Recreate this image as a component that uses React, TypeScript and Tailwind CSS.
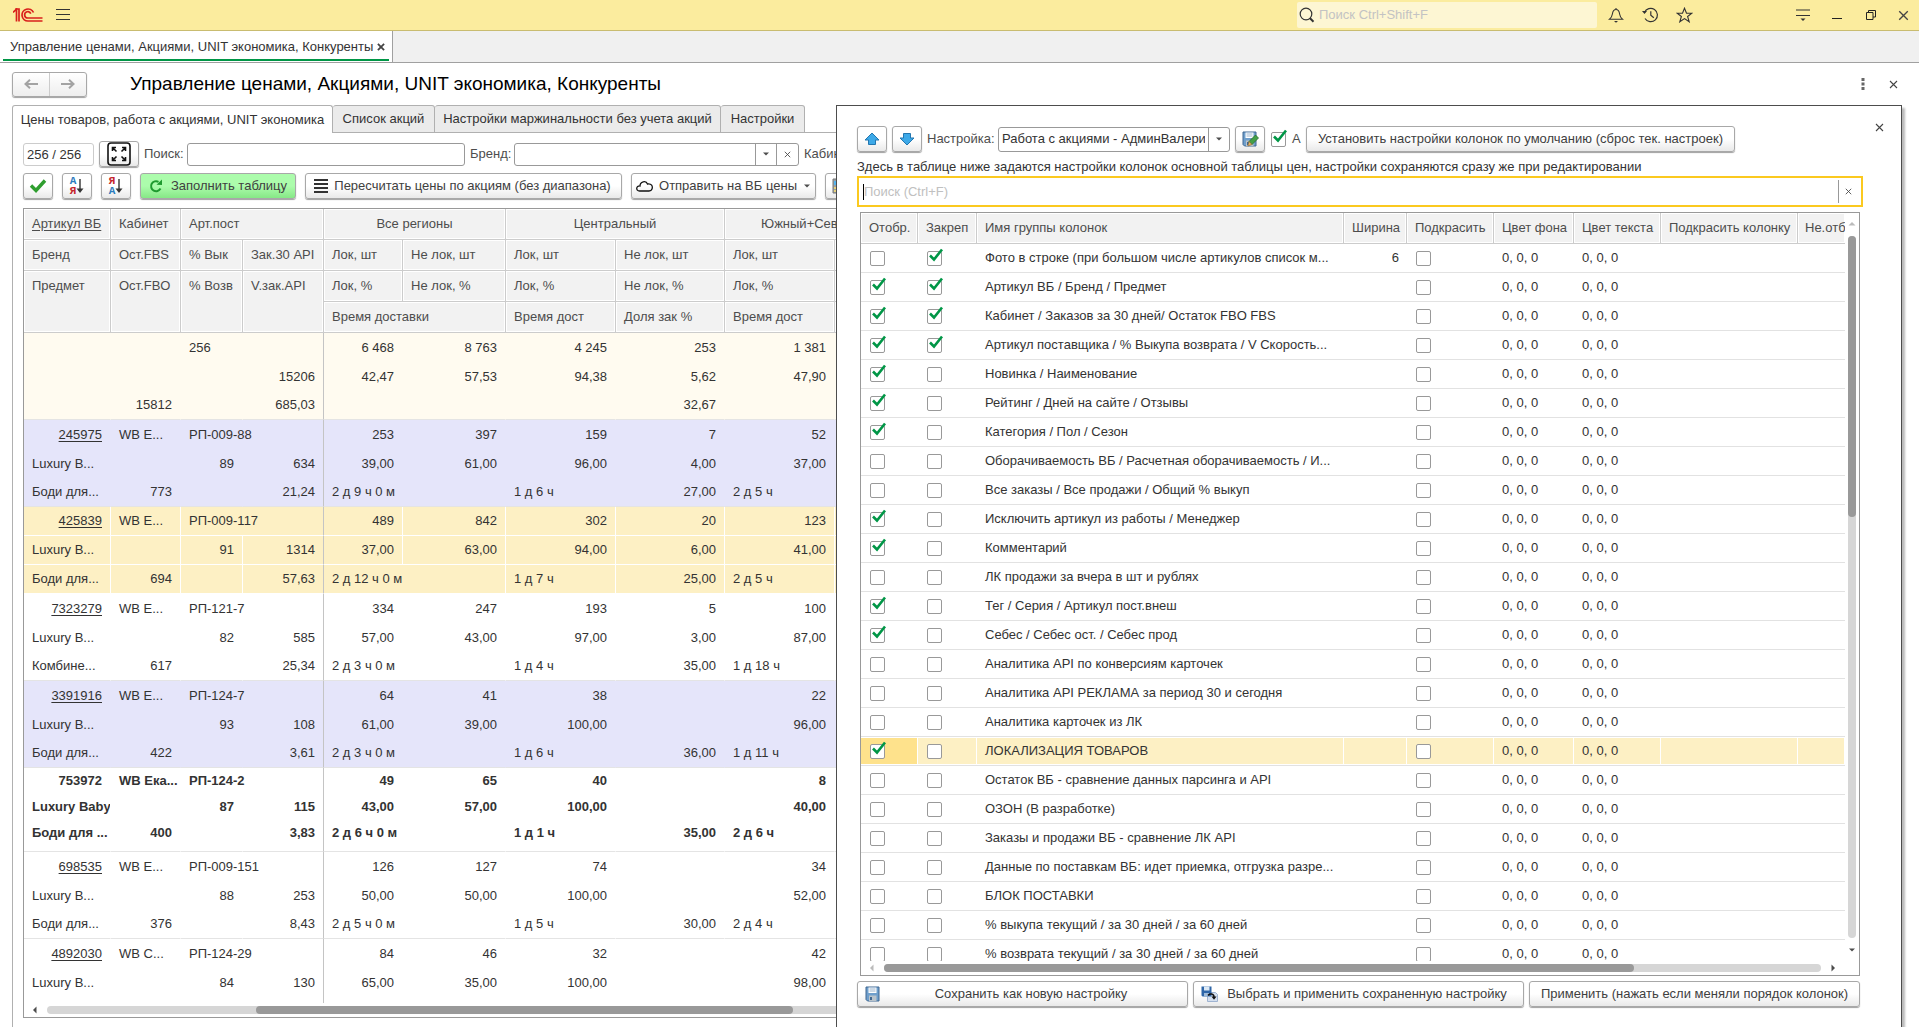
import { ReactNode, useState } from "react";
import clsx from "clsx";

const BTN =
  "flex h-[26px] shrink-0 items-center justify-center rounded-[3px] border border-[#a8a8a8] bg-linear-to-b from-white from-50% to-[#e9e9e9] shadow-[0_1px_1px_#a0a0a0]";

interface Product {
  article: string;
  cabinet: string;
  supplier: string;
  brand: string;
  subject: string;
  fbo: string;
  buyout: string;
  orders: string;
  speed: string;
  qty: string[];
  pct: string[];
  times: string[];
  share: string;
  kind?: "total" | "lilac" | "selected" | "bold";
}

const products: Product[] = [
  {
    article: "", cabinet: "", supplier: "256", brand: "", subject: "", fbo: "15812", buyout: "", orders: "15206", speed: "685,03",
    qty: ["6 468", "8 763", "4 245", "253", "1 381"],
    pct: ["42,47", "57,53", "94,38", "5,62", "47,90"],
    times: ["", "", ""], share: "32,67", kind: "total",
  },
  {
    article: "245975", cabinet: "WB E...", supplier: "РП-009-88", brand: "Luxury B...", subject: "Боди для...", fbo: "773", buyout: "89", orders: "634", speed: "21,24",
    qty: ["253", "397", "159", "7", "52"],
    pct: ["39,00", "61,00", "96,00", "4,00", "37,00"],
    times: ["2 д 9 ч 0 м", "1 д 6 ч", "2 д 5 ч"], share: "27,00", kind: "lilac",
  },
  {
    article: "425839", cabinet: "WB E...", supplier: "РП-009-117", brand: "Luxury B...", subject: "Боди для...", fbo: "694", buyout: "91", orders: "1314", speed: "57,63",
    qty: ["489", "842", "302", "20", "123"],
    pct: ["37,00", "63,00", "94,00", "6,00", "41,00"],
    times: ["2 д 12 ч 0 м", "1 д 7 ч", "2 д 5 ч"], share: "25,00", kind: "selected",
  },
  {
    article: "7323279", cabinet: "WB E...", supplier: "РП-121-7", brand: "Luxury B...", subject: "Комбине...", fbo: "617", buyout: "82", orders: "585", speed: "25,34",
    qty: ["334", "247", "193", "5", "100"],
    pct: ["57,00", "43,00", "97,00", "3,00", "87,00"],
    times: ["2 д 3 ч 0 м", "1 д 4 ч", "1 д 18 ч"], share: "35,00",
  },
  {
    article: "3391916", cabinet: "WB E...", supplier: "РП-124-7", brand: "Luxury B...", subject: "Боди для...", fbo: "422", buyout: "93", orders: "108", speed: "3,61",
    qty: ["64", "41", "38", "", "22"],
    pct: ["61,00", "39,00", "100,00", "", "96,00"],
    times: ["2 д 3 ч 0 м", "1 д 6 ч", "1 д 11 ч"], share: "36,00", kind: "lilac",
  },
  {
    article: "753972", cabinet: "WB Ека...", supplier: "РП-124-2", brand: "Luxury Baby", subject: "Боди для ...", fbo: "400", buyout: "87", orders: "115", speed: "3,83",
    qty: ["49", "65", "40", "", "8"],
    pct: ["43,00", "57,00", "100,00", "", "40,00"],
    times: ["2 д 6 ч 0 м", "1 д 1 ч", "2 д 6 ч"], share: "35,00", kind: "bold",
  },
  {
    article: "698535", cabinet: "WB E...", supplier: "РП-009-151", brand: "Luxury B...", subject: "Боди для...", fbo: "376", buyout: "88", orders: "253", speed: "8,43",
    qty: ["126", "127", "74", "", "34"],
    pct: ["50,00", "50,00", "100,00", "", "52,00"],
    times: ["2 д 5 ч 0 м", "1 д 5 ч", "2 д 4 ч"], share: "30,00",
  },
  {
    article: "4892030", cabinet: "WB C...", supplier: "РП-124-29", brand: "Luxury B...", subject: "", fbo: "", buyout: "84", orders: "130", speed: "",
    qty: ["84", "46", "32", "", "42"],
    pct: ["65,00", "35,00", "100,00", "", "98,00"],
    times: ["", "", ""], share: "",
  },
];

// [name, shown, pinned, width]
const initialGroups: [string, boolean, boolean, string?][] = [
  ["Фото в строке (при большом числе артикулов список м...", false, true, "6"],
  ["Артикул ВБ / Бренд / Предмет", true, true],
  ["Кабинет / Заказов за 30 дней/ Остаток FBO FBS", true, true],
  ["Артикул поставщика / % Выкупа возврата / V Скорость...", true, true],
  ["Новинка / Наименование", true, false],
  ["Рейтинг / Дней на сайте / Отзывы", true, false],
  ["Категория / Пол / Сезон", true, false],
  ["Оборачиваемость ВБ / Расчетная оборачиваемость / И...", false, false],
  ["Все заказы / Все продажи / Общий % выкуп", false, false],
  ["Исключить артикул из работы / Менеджер", true, false],
  ["Комментарий", true, false],
  ["ЛК продажи за вчера в шт и рублях", false, false],
  ["Тег / Серия / Артикул пост.внеш", true, false],
  ["Себес / Себес ост. / Себес прод", true, false],
  ["Аналитика API по конверсиям карточек", false, false],
  ["Аналитика API РЕКЛАМА за период 30 и сегодня", false, false],
  ["Аналитика карточек из ЛК", false, false],
  ["ЛОКАЛИЗАЦИЯ ТОВАРОВ", true, false],
  ["Остаток ВБ - сравнение данных парсинга и API", false, false],
  ["ОЗОН (В разработке)", false, false],
  ["Заказы и продажи ВБ - сравнение ЛК API", false, false],
  ["Данные по поставкам ВБ: идет приемка, отгрузка разре...", false, false],
  ["БЛОК ПОСТАВКИ", false, false],
  ["% выкупа текущий / за 30 дней / за 60 дней", false, false],
  ["% возврата текущий / за 30 дней / за 60 дней", false, false],
];

function Cross({ size = 9, bold = false }: { size?: number; bold?: boolean }) {
  return (
    <svg width={size} height={size} viewBox="0 0 9 9" stroke="#444" strokeWidth={bold ? 2 : 1.1}>
      <path d="M1 1l7 7M8 1l-7 7" />
    </svg>
  );
}

function Caret({ dir = "down", color = "#4d4d4d" }: { dir?: "down" | "up" | "left" | "right"; color?: string }) {
  const d = {
    down: "M1 2.5h6L4 5.5z",
    up: "M0.5 5.5h7L4 2z",
    left: "M5.5 0.5v7L2 4z",
    right: "M2.5 0.5v7L6 4z",
  };
  return (
    <svg width="8" height="8" viewBox="0 0 8 8" fill={color}>
      <path d={d[dir]} />
    </svg>
  );
}

function Check({ label, defaultChecked = false }: { label: string; defaultChecked?: boolean }) {
  return (
    <span className="relative block size-[15px] shrink-0">
      <input
        type="checkbox"
        aria-label={label}
        defaultChecked={defaultChecked}
        className="peer block size-[15px] appearance-none rounded-[2px] border border-[#999] bg-white"
      />
      <svg
        width="17"
        height="16"
        viewBox="0 0 17 16"
        fill="none"
        className="pointer-events-none absolute -top-1 left-0 hidden peer-checked:block"
      >
        <path d="M3 8.5l4 4L15 2.5" stroke="#009646" strokeWidth="2.6" />
      </svg>
    </span>
  );
}

function SortIcon({ flip = false }: { flip?: boolean }) {
  return (
    <span className="flex items-center">
      <span className="flex flex-col font-['Liberation_Mono',monospace] text-[11px] leading-[10px] font-bold">
        <span className={flip ? "text-[#c4262e]" : "text-[#2b7bbd]"}>{flip ? "Я" : "А"}</span>
        <span className={flip ? "text-[#2b7bbd]" : "text-[#c4262e]"}>{flip ? "А" : "Я"}</span>
      </span>
      <svg width="8" height="16" viewBox="0 0 8 16" fill="none">
        <path d="M4 1v12" stroke="#333" strokeWidth="1.4" />
        <path d="M0.5 10.5h7L4 15z" fill="#333" />
      </svg>
    </span>
  );
}

function BigArrow({ down = false }: { down?: boolean }) {
  return (
    <svg width="16" height="14" viewBox="0 0 16 14" className={clsx(down && "rotate-180")}>
      <path
        d="M8 1L15 8H11.5V12.5H4.5V8H1z"
        fill="#3da9e8"
        stroke="#2377b0"
        strokeWidth="1"
        strokeLinejoin="round"
      />
    </svg>
  );
}

function Floppy({ pencil = false }: { pencil?: boolean }) {
  return (
    <svg width="17" height="16" viewBox="0 0 17 16">
      <path d="M1 1h13v14H2.5L1 13.5z" fill="#6f9fcc" stroke="#3f6791" />
      <path d="M3.5 1.5h8v5.5h-8z" fill="#fff" />
      <path d="M4.5 3h6M4.5 5h6" stroke="#9ab3cc" />
      <path d="M4 9.5h7.5V15H4z" fill="#b9c3cb" />
      <path d="M5 11h2v3H5z" fill="#3f6791" />
      {pencil && (
        <>
          <path d="M7 10.5L13.5 4l3 3L10 13.5z" fill="#43a047" stroke="#2a6f2e" strokeWidth=".8" />
          <path d="M7 10.5l3 3L5.8 15z" fill="#e8b46a" stroke="#8a6326" strokeWidth=".6" />
        </>
      )}
    </svg>
  );
}

function FloppyLoad() {
  return (
    <svg width="17" height="16" viewBox="0 0 17 16">
      <path d="M6.500 6.500h8l2 2v7H6.500z" fill="#d4dfee" stroke="#9fb3d1" />
      <path d="M0.500 0.500h10v10h-9l-1-1z" fill="#2f66a8" />
      <path d="M3 0.500h5.500v4H3z" fill="#dce9f5" />
      <path d="M3 7h5v3.500H3z" fill="#9fbbd9" />
      <path d="M7 9.500c1.500-2.500 6-2 6 1.500" fill="none" stroke="#111" strokeWidth="1.500" />
      <path d="M10.500 10.500h5L13 13.800z" fill="#111" />
    </svg>
  );
}

function TopBar() {
  return (
    <header className="flex h-[31px] shrink-0 items-center border-b border-[#c9bc70] bg-[#fbec9e]">
      <svg className="ml-[13px]" width="30" height="14" viewBox="0 0 30 14" fill="none" stroke="#d9201c" strokeWidth="1.7">
        <path d="M0 4.500L3.500 1.200V13.500" />
        <path d="M2.200 1H6V13.500" />
        <path d="M20.500 4.500A6 6 0 1 0 15 13H29.500" />
        <path d="M17.800 5.600A3.200 3.200 0 1 0 15 10H29.500" />
      </svg>
      <button aria-label="Меню" className="ml-[13px]">
        <svg width="14" height="12" viewBox="0 0 14 12" stroke="#333">
          <path d="M0 .5h14M0 5.500h14M0 10.500h14" />
        </svg>
      </button>
      <label className="ml-auto flex h-[26px] w-[300px] items-center gap-1 rounded-[2px] bg-[#fdf6d3] pl-0.5">
        <svg width="16" height="16" viewBox="0 0 16 16" fill="none" stroke="#333">
          <circle cx="7" cy="7" r="5.8" strokeWidth="1.2" />
          <path d="M11 11.200l3.500 3.500" strokeWidth="2" />
        </svg>
        <input
          type="text"
          aria-label="Поиск"
          placeholder="Поиск Ctrl+Shift+F"
          className="min-w-0 flex-1 outline-none placeholder:text-[#c3c3c3]"
        />
      </label>
      <button aria-label="Уведомления" className="ml-0.5 flex w-[34px] justify-center">
        <svg width="16" height="16" viewBox="0 0 16 16" fill="none" stroke="#333" strokeWidth="1.1">
          <path d="M8 1v1.500M1.500 12.200h13c-2-1.500-2.500-2.700-2.900-5.200C11.200 4 10 2.500 8 2.500S4.800 4 4.400 7c-.4 2.500-.9 3.700-2.900 5.200z" />
          <path d="M6 14h4L8 15.800z" fill="#333" stroke="none" />
        </svg>
      </button>
      <button aria-label="История" className="flex w-[34px] justify-center">
        <svg width="17" height="16" viewBox="0 0 17 16" fill="none" stroke="#333" strokeWidth="1.2">
          <path d="M2.500 5.500A6.700 6.700 0 1 1 3 11.500" />
          <path d="M0 4l2.500 3L5 4z" fill="#333" stroke="none" />
          <path d="M8.800 4.200v4l3 2.500" />
        </svg>
      </button>
      <button aria-label="Избранное" className="flex w-[34px] justify-center">
        <svg width="17" height="16" viewBox="0 0 17 16" fill="none" stroke="#333" strokeWidth="1.1">
          <path d="M8.500 1.200l2 5h5.300l-4.200 3.300 1.600 5.300-4.700-3.200-4.700 3.200 1.600-5.300L1.200 6.200h5.300z" />
        </svg>
      </button>
      <button aria-label="Настройка" className="ml-[85px] flex w-[34px] justify-center">
        <svg width="14" height="14" viewBox="0 0 14 14" stroke="#333" strokeWidth="1.2">
          <path d="M0 2h14M0 7.500h14" />
          <path d="M4.500 10.500h5L7 13z" fill="#333" stroke="none" />
        </svg>
      </button>
      <button aria-label="Свернуть" className="flex w-[34px] justify-center">
        <svg width="10" height="10" viewBox="0 0 10 10" stroke="#222">
          <path d="M0 8.500h10" />
        </svg>
      </button>
      <button aria-label="Восстановить" className="flex w-[34px] justify-center">
        <svg width="10" height="10" viewBox="0 0 10 10" fill="none" stroke="#222">
          <path d="M0.500 2.500h6.500v7H0.500zM2.500 2.500v-2h7v6.500H7" />
        </svg>
      </button>
      <button aria-label="Закрыть" className="flex w-[31px] justify-center">
        <Cross size={11} />
      </button>
    </header>
  );
}

function Th({ children, className, ...rest }: { children?: ReactNode; className?: string; colSpan?: number; rowSpan?: number }) {
  return (
    <th
      {...rest}
      className={clsx(
        "h-[31px] overflow-hidden border-r border-b border-[#ccc] bg-[#f2f2f2] px-2 text-left align-top leading-[30px] font-normal whitespace-nowrap text-[#4d4d4d] shadow-[inset_0_0_0_1px_#fff]",
        className,
      )}
    >
      {children}
    </th>
  );
}

function ProductRows({ p }: { p: Product }) {
  const bold = p.kind === "bold";
  const selected = p.kind === "selected";
  const tr = clsx(
    bold ? "h-[26px] font-bold" : "h-[29px]",
    p.kind === "total" && "bg-[#fffbf0]",
    p.kind === "lilac" && "bg-[#e5e5fa]",
    selected && "bg-[#fdf0c4]",
  );
  const base = "overflow-hidden whitespace-nowrap border-r px-2";
  // bottom line of the group carries the separator
  const line = selected ? "border-white border-b" : "border-transparent";
  const last = clsx("border-b", selected ? "border-b-white border-r-white" : "border-b-[#e4e4e4] border-r-transparent");
  const split = "border-r-[#c4c4c4]!";
  return (
    <tbody>
      <tr className={tr}>
        <td className={clsx(base, line, "text-right")}>
          {bold ? p.article : p.article && <a href="#" className="underline underline-offset-2">{p.article}</a>}
        </td>
        <td className={clsx(base, line)}>{p.cabinet}</td>
        <td className={clsx(base, line, split)} colSpan={2}>{p.supplier}</td>
        {p.qty.map((v, i) => (
          <td key={i} className={clsx(base, line, "text-right")}>{v}</td>
        ))}
        <td className={clsx(base, line)} />
      </tr>
      <tr className={tr}>
        <td className={clsx(base, line)}>{p.brand}</td>
        <td className={clsx(base, line)} />
        <td className={clsx(base, line, "text-right")}>{p.buyout}</td>
        <td className={clsx(base, line, split, "text-right")}>{p.orders}</td>
        {p.pct.map((v, i) => (
          <td key={i} className={clsx(base, line, "text-right")}>{v}</td>
        ))}
        <td className={clsx(base, line)} />
      </tr>
      <tr className={clsx(tr, bold && "h-[32px]! align-top leading-[26px]")}>
        <td className={clsx(base, last)}>{p.subject}</td>
        <td className={clsx(base, last, "text-right")}>{p.fbo}</td>
        <td className={clsx(base, last)} />
        <td className={clsx(base, last, split, "text-right")}>{p.speed}</td>
        <td className={clsx(base, last)} colSpan={2}>{p.times[0]}</td>
        <td className={clsx(base, last)}>{p.times[1]}</td>
        <td className={clsx(base, last, "text-right")}>{p.share}</td>
        <td className={clsx(base, last)}>{p.times[2]}</td>
        <td className={clsx(base, last)} />
      </tr>
    </tbody>
  );
}

function PriceTable() {
  return (
    <div className="mt-[9px] mb-[9px] ml-[10px] flex min-h-0 flex-1 flex-col border border-[#999]">
      <div className="min-h-0 flex-1 overflow-hidden">
        <table className="w-[841px] table-fixed border-separate border-spacing-0">
          <colgroup>
            <col className="w-[87px]" />
            <col className="w-[70px]" />
            <col className="w-[62px]" />
            <col className="w-[81px]" />
            <col className="w-[79px]" />
            <col className="w-[103px]" />
            <col className="w-[110px]" />
            <col className="w-[109px]" />
            <col className="w-[110px]" />
            <col className="w-[30px]" />
          </colgroup>
          <thead>
            <tr>
              <Th className="underline underline-offset-2">Артикул ВБ</Th>
              <Th>Кабинет</Th>
              <Th colSpan={2}>Арт.пост</Th>
              <Th colSpan={2} className="text-center!">Все регионы</Th>
              <Th colSpan={2} className="text-center!">Центральный</Th>
              <Th colSpan={2} className="pl-9!">Южный+Сев</Th>
            </tr>
            <tr>
              <Th>Бренд</Th>
              <Th>Ост.FBS</Th>
              <Th>% Вык</Th>
              <Th>Зак.30 API</Th>
              <Th>Лок, шт</Th>
              <Th>Не лок, шт</Th>
              <Th>Лок, шт</Th>
              <Th>Не лок, шт</Th>
              <Th>Лок, шт</Th>
              <Th />
            </tr>
            <tr>
              <Th rowSpan={2}>Предмет</Th>
              <Th rowSpan={2}>Ост.FBO</Th>
              <Th rowSpan={2}>% Возв</Th>
              <Th rowSpan={2}>V.зак.API</Th>
              <Th>Лок, %</Th>
              <Th>Не лок, %</Th>
              <Th>Лок, %</Th>
              <Th>Не лок, %</Th>
              <Th>Лок, %</Th>
              <Th />
            </tr>
            <tr>
              <Th colSpan={2}>Время доставки</Th>
              <Th>Время дост</Th>
              <Th>Доля зак %</Th>
              <Th>Время дост</Th>
              <Th />
            </tr>
          </thead>
          {products.map((p, i) => (
            <ProductRows key={i} p={p} />
          ))}
        </table>
      </div>
      <div className="flex h-[14px] shrink-0 items-center pl-[7px]">
        <Caret dir="left" />
        <div className="ml-2 flex h-2 flex-1 rounded-full bg-[#d6d6d6]">
          <div className="ml-[209px] w-[537px] rounded-full bg-[#999]" />
        </div>
      </div>
    </div>
  );
}

function Toolbar() {
  return (
    <>
      <div className="mt-2 ml-[10px] flex h-[26px] items-center gap-[5px]">
        <input
          type="text"
          aria-label="Количество"
          readOnly
          defaultValue="256 / 256"
          className="h-[23px] w-[71px] shrink-0 rounded-[3px] border border-[#ccc] px-[3px]"
        />
        <button aria-label="На весь экран" className={clsx(BTN, "w-10")}>
          <svg width="24" height="24" viewBox="0 0 24 24" fill="none" stroke="#111">
            <rect x="1" y="1" width="22" height="22" rx="3" strokeWidth="1.600" />
            <path
              d="M5.500 9V5.500H9M15 5.500h3.500V9M18.500 15v3.500H15M9 18.500H5.500V15M5.500 5.500l4 4M18.500 5.500l-4 4M18.500 18.500l-4-4M5.500 18.500l4-4"
              strokeWidth="1.600"
            />
          </svg>
        </button>
        <label htmlFor="search" className="w-[38px] shrink-0 whitespace-nowrap text-[#4d4d4d]">Поиск:</label>
        <input id="search" type="text" className="h-[23px] w-[278px] shrink-0 rounded-[3px] border border-[#999] px-1" />
        <label htmlFor="brand" className="w-[39px] shrink-0 whitespace-nowrap text-[#4d4d4d]">Бренд:</label>
        <div className="flex h-[23px] w-[285px] shrink-0 rounded-[3px] border border-[#999]">
          <input id="brand" type="text" className="min-w-0 flex-1 px-1" />
          <button aria-label="Выбрать бренд" className="flex w-[21px] items-center justify-center border-l border-[#999]">
            <Caret />
          </button>
          <button aria-label="Очистить" className="flex w-[22px] items-center justify-center border-l border-[#999]">
            <Cross size={7} />
          </button>
        </div>
        <span className="text-[#4d4d4d]">Кабинет:</span>
      </div>
      <div className="mt-1.5 ml-[10px] flex items-center gap-[9px] text-[#404040]">
        <button aria-label="Применить" className={clsx(BTN, "w-[30px]")}>
          <svg width="18" height="14" viewBox="0 0 18 14" fill="none">
            <path d="M2 6.500l5 5L16 1.500" stroke="#2f9e2f" strokeWidth="3.400" />
          </svg>
        </button>
        <button aria-label="Сортировать по возрастанию" className={clsx(BTN, "w-[30px]")}>
          <SortIcon />
        </button>
        <button aria-label="Сортировать по убыванию" className={clsx(BTN, "w-[30px]")}>
          <SortIcon flip />
        </button>
        <button className={clsx(BTN, "w-[156px] gap-2 from-[#acfcac]! to-[#86e886]!")}>
          <svg width="14" height="14" viewBox="0 0 14 14" fill="none">
            <path d="M11.500 9.500A5 5 0 1 1 9.500 2.800" stroke="#1f9a2f" strokeWidth="2" />
            <path d="M7.500 5.800L13 6V0.500z" fill="#1f9a2f" />
          </svg>
          Заполнить таблицу
        </button>
        <button className={clsx(BTN, "w-[317px] gap-1.5 pr-0.5")}>
          <svg width="14" height="14" viewBox="0 0 14 14" stroke="#333" strokeWidth="2">
            <path d="M0 1h14M0 5h14M0 9h14M0 13h14" />
          </svg>
          Пересчитать цены по акциям (без диапазона)
        </button>
        <button className={clsx(BTN, "w-[185px] gap-1.5")}>
          <svg width="17" height="12" viewBox="0 0 17 12" fill="none" stroke="#111" strokeWidth="1.300">
            <path d="M3.500 11C-.5 11 0 5.500 4 6 4 1.500 10 0 11.500 4c4-.5 5.500 2 4.500 5-.5 1.500-1.500 2-3 2z" />
          </svg>
          Отправить на ВБ цены
          <Caret />
        </button>
        <button aria-label="Калькулятор" className={clsx(BTN, "w-[40px] justify-start! pl-1.5")}>
          <svg width="14" height="16" viewBox="0 0 14 16">
            <path d="M1 1h12v14H1z" fill="#9aa3a8" stroke="#777" />
            <path d="M2 3h9v4H2z" fill="#56b4ee" />
            <path d="M2 9h2v2H2zM5 9h2v2H5zM2 12h2v2H2z" fill="#e8d27a" />
          </svg>
        </button>
      </div>
    </>
  );
}

const formTabs = [
  { title: "Цены товаров, работа с акциями, UNIT экономика", width: "w-[321px]" },
  { title: "Список акций", width: "w-[102px]" },
  { title: "Настройки маржинальности без учета акций", width: "w-[286px]" },
  { title: "Настройки", width: "w-[84px]" },
];

function PriceForm() {
  const [tab, setTab] = useState(0);
  return (
    <>
      <div className="flex h-[42px] shrink-0 items-center pl-3">
        <div className="flex h-[25px] w-[75px] rounded-[3px] border border-[#a8a8a8] bg-linear-to-b from-white to-[#eee] shadow-[0_1px_1px_#a0a0a0]">
          <button aria-label="Назад" className="flex flex-1 items-center justify-center border-r border-[#ccc]">
            <svg width="14" height="10" viewBox="0 0 14 10" fill="none" stroke="#a3a3a3" strokeWidth="2">
              <path d="M14 5H2M6 .8L1.500 5 6 9.200" />
            </svg>
          </button>
          <button aria-label="Вперед" className="flex flex-1 items-center justify-center">
            <svg width="14" height="10" viewBox="0 0 14 10" fill="none" stroke="#a3a3a3" strokeWidth="2">
              <path d="M0 5h12M8 .8L12.500 5 8 9.200" />
            </svg>
          </button>
        </div>
        <h1 className="ml-[43px] flex-1 text-[19px] text-black">Управление ценами, Акциями, UNIT экономика, Конкуренты</h1>
        <button aria-label="Еще" className="flex w-[30px] justify-center">
          <svg width="4" height="12" viewBox="0 0 4 12" fill="#666">
            <path d="M.5 0h3v3h-3zM.5 4.500h3v3h-3zM.5 9h3v3h-3z" />
          </svg>
        </button>
        <button aria-label="Закрыть форму" className="mr-[11px] flex w-[30px] justify-center">
          <Cross size={9} />
        </button>
      </div>
      <div className="flex min-h-0 flex-1 flex-col pr-6 pl-3">
        <nav className="flex h-7 shrink-0">
          {formTabs.map((t, i) => (
            <button
              key={t.title}
              onClick={() => setTab(i)}
              className={clsx(
                "rounded-t-[3px] border-t border-r border-[#b0b0b0] whitespace-nowrap first:border-l",
                t.width,
                i === tab ? "bg-white" : "border-b bg-[#ebebeb]",
              )}
            >
              {t.title}
            </button>
          ))}
          <div className="flex-1 border-b border-[#b0b0b0]" />
        </nav>
        <div className="flex min-h-0 flex-1 flex-col border-l border-[#b0b0b0]">
          <Toolbar />
          <PriceTable />
        </div>
      </div>
    </>
  );
}

function ColumnsTable() {
  const cell = "overflow-hidden border-b border-[#e2e2e2] px-2 whitespace-nowrap";
  const check = "pl-[9px]!";
  const [current] = useState(17);
  return (
    <div className="mx-[3px] mt-[5px] flex min-h-0 flex-1 border border-[#999]">
      <div className="flex min-w-0 flex-1 flex-col">
        <div className="min-h-0 flex-1 overflow-hidden">
          <table className="w-full table-fixed border-separate border-spacing-0">
            <colgroup>
              <col className="w-[57px]" />
              <col className="w-[59px]" />
              <col />
              <col className="w-[63px]" />
              <col className="w-[87px]" />
              <col className="w-[80px]" />
              <col className="w-[87px]" />
              <col className="w-[137px]" />
              <col className="w-[47px]" />
            </colgroup>
            <thead>
              <tr>
                <Th>Отобр.</Th>
                <Th>Закреп</Th>
                <Th>Имя группы колонок</Th>
                <Th>Ширина</Th>
                <Th>Подкрасить</Th>
                <Th>Цвет фона</Th>
                <Th>Цвет текста</Th>
                <Th>Подкрасить колонку</Th>
                <Th className="border-r-0 pr-0! pl-[7px]!">Не.отб</Th>
              </tr>
            </thead>
            <tbody>
              {initialGroups.map(([name, shown, pinned, width], i) => {
                const c = clsx(cell, i === current && "bg-[#fdf0c4] shadow-[inset_-1px_0_0_#fff,inset_0_1px_0_#fff,inset_0_-1px_0_#fff]");
                return (
                  <tr key={name} className="h-[29px]">
                    <td className={clsx(c, check, i === current && "bg-[#fee28c]!")}>
                      <Check label={`Отображать: ${name}`} defaultChecked={shown} />
                    </td>
                    <td className={clsx(c, check)}>
                      <Check label={`Закрепить: ${name}`} defaultChecked={pinned} />
                    </td>
                    <td className={c}>{name}</td>
                    <td className={clsx(c, "text-right")}>{width}</td>
                    <td className={clsx(c, check)}>
                      <Check label={`Подкрасить: ${name}`} />
                    </td>
                    <td className={c}>0, 0, 0</td>
                    <td className={c}>0, 0, 0</td>
                    <td className={c} />
                    <td className={c} />
                  </tr>
                );
              })}
            </tbody>
          </table>
        </div>
        <div className="flex h-[14px] shrink-0 items-center pr-2 pl-[7px]">
          <Caret dir="left" color="#bbb" />
          <div className="mx-2 flex h-2 flex-1 rounded-full bg-[#d6d6d6]">
            <div className="w-4/5 rounded-full bg-[#999]" />
          </div>
          <Caret dir="right" />
        </div>
      </div>
      <div className="flex w-[14px] flex-col items-center pt-[7px] pb-[21px]">
        <Caret dir="up" color="#bbb" />
        <div className="my-2 flex w-2 flex-1 flex-col rounded-full bg-[#d6d6d6]">
          <div className="h-2/5 rounded-full bg-[#999]" />
        </div>
        <Caret />
      </div>
    </div>
  );
}

function SettingsPanel() {
  return (
    <section className="absolute top-[105px] right-[17px] bottom-0 left-[836px] flex flex-col border-x border-t border-[#4d4d4d] bg-white pt-5 pr-[38px] pb-5 pl-5 shadow-[3px_3px_2px_#bbb]">
      <button aria-label="Закрыть панель" className="absolute top-[17px] right-[17px]">
        <Cross size={9} />
      </button>
      <div className="flex items-center gap-[5px]">
        <button aria-label="Вверх" className={clsx(BTN, "w-[30px]")}>
          <BigArrow />
        </button>
        <button aria-label="Вниз" className={clsx(BTN, "w-[30px]")}>
          <BigArrow down />
        </button>
        <label htmlFor="preset" className="w-[66px] shrink-0 whitespace-nowrap text-[#4d4d4d]">Настройка:</label>
        <div className="flex h-[25px] w-[232px] shrink-0 items-stretch rounded-[3px] border border-[#999]">
          <select id="preset" className="min-w-0 flex-1 appearance-none overflow-hidden px-[3px] outline-none">
            <option>Работа с акциями - АдминВалери</option>
          </select>
          <span className="flex w-[21px] items-center justify-center border-l border-[#999]">
            <Caret />
          </span>
        </div>
        <button aria-label="Сохранить настройку" className={clsx(BTN, "w-[30px]")}>
          <Floppy pencil />
        </button>
        <label className="flex w-[31px] shrink-0 items-center gap-1.5 pl-px text-[#4d4d4d]">
          <Check label="А" defaultChecked />А
        </label>
        <button className={clsx(BTN, "w-[429px] text-[#404040]")}>
          Установить настройки колонок по умолчанию (сброс тек. настроек)
        </button>
      </div>
      <p className="mt-[5px] h-[19px] leading-5">
        Здесь в таблице ниже задаются настройки колонок основной таблицы цен, настройки сохраняются сразу же при редактировании
      </p>
      <div className="flex h-[31px] shrink-0 items-center border-2 border-[#fbc91f]">
        <span className="ml-1 h-4 w-px bg-black" />
        <input
          type="text"
          aria-label="Поиск по колонкам"
          placeholder="Поиск (Ctrl+F)"
          className="min-w-0 flex-1 outline-none placeholder:text-[#c0c0c0]"
        />
        <button aria-label="Очистить поиск" className="flex h-[23px] w-[23px] items-center justify-center border-l border-[#999] pr-1">
          <Cross size={7} />
        </button>
      </div>
      <ColumnsTable />
      <div className="mt-[5px] mr-[3px] grid grid-cols-3 gap-[5px] text-[#404040]">
        <button className={clsx(BTN, "px-[7px]")}>
          <Floppy />
          <span className="flex-1">Сохранить как новую настройку</span>
        </button>
        <button className={clsx(BTN, "px-[7px]")}>
          <FloppyLoad />
          <span className="flex-1">Выбрать и применить сохраненную настройку</span>
        </button>
        <button className={BTN}>Применить (нажать если меняли порядок колонок)</button>
      </div>
    </section>
  );
}

export default function App() {
  return (
    <div className="relative flex h-screen flex-col overflow-hidden bg-white font-['Liberation_Sans',Arial,sans-serif] text-[13px] leading-4 text-[#333]">
      <TopBar />
      <div className="flex h-8 shrink-0 border-b border-[#a0a0a0] bg-[#f0f0f0]">
        <div className="flex border-r border-[#a0a0a0] bg-white px-[3px]">
          <div className="mb-px flex items-center gap-1 border-b-2 border-[#009646] pt-1 pr-1 pl-[7px]">
            <span>Управление ценами, Акциями, UNIT экономика, Конкуренты</span>
            <button aria-label="Закрыть вкладку">
              <Cross size={8} bold />
            </button>
          </div>
        </div>
      </div>
      <PriceForm />
      <SettingsPanel />
    </div>
  );
}
